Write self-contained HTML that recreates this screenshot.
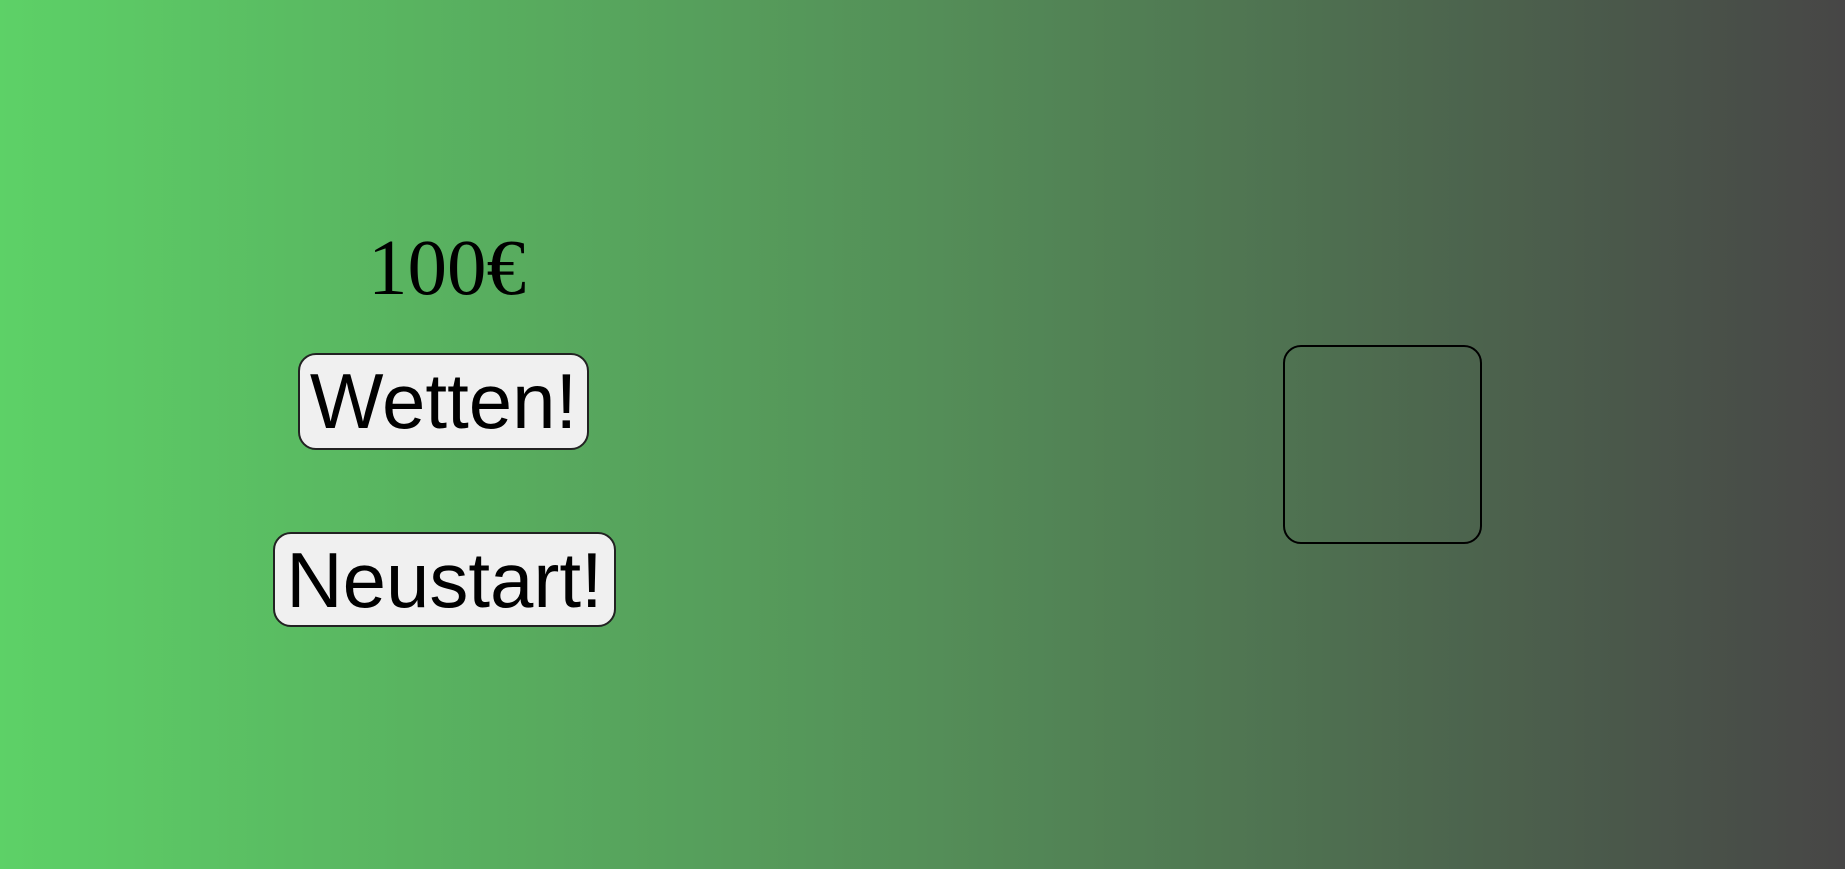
<!DOCTYPE html>
<html><head><meta charset="utf-8"><style>
html,body{margin:0;padding:0;width:1845px;height:869px;overflow:hidden}
body{background:linear-gradient(to right,#5dd167,#548f58 50%,#474646);position:relative}
.money{position:absolute;left:347px;top:229px;width:200px;text-align:center;font-family:"Liberation Serif",serif;font-size:79px;line-height:1;color:#000}
.btn{position:absolute;box-sizing:border-box;background:#f0f0f0;border:2px solid #222;border-radius:18px;font-family:"Liberation Sans",sans-serif;font-size:78px;color:#000;text-align:center;line-height:1}
.w{left:298px;top:353px;width:291px;height:97px;padding-top:7px}
.n{left:273px;top:532px;width:343px;height:95px;padding-top:7px}
.box{position:absolute;left:1283px;top:345px;width:199px;height:199px;box-sizing:border-box;border:2px solid #000;border-radius:18px}
</style></head><body>
<div class="money">100€</div>
<div class="btn w">Wetten!</div>
<div class="btn n">Neustart!</div>
<div class="box"></div>
</body></html>
